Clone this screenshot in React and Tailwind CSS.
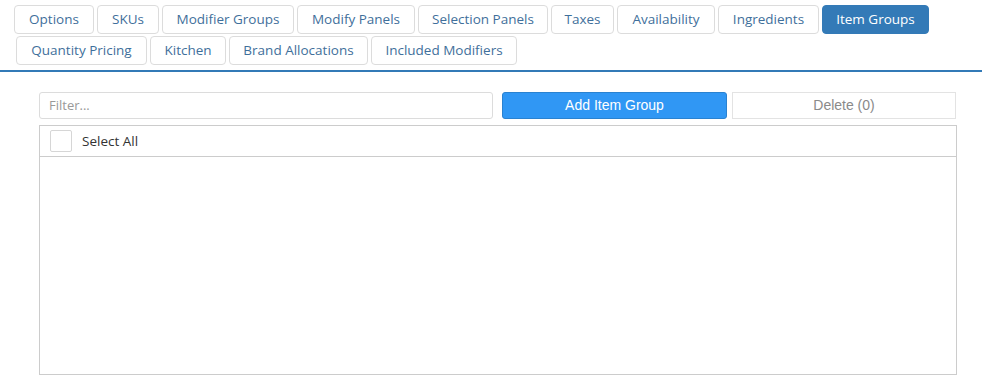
import React from "react";

const row1 = [
  ["Options", "w-[80px]"],
  ["SKUs", "w-[62px]"],
  ["Modifier Groups", "w-[132px]"],
  ["Modify Panels", "w-[118px]"],
  ["Selection Panels", "w-[130px]"],
  ["Taxes", "w-[63px]"],
  ["Availability", "w-[98px]"],
  ["Ingredients", "w-[101px]"],
  ["Item Groups", "w-[107px]", true],
];
const row2 = [
  ["Quantity Pricing", "w-[131px]"],
  ["Kitchen", "w-[76px]"],
  ["Brand Allocations", "w-[139px]"],
  ["Included Modifiers", "w-[146px]"],
];

function Tab({ label, w, active }) {
  return (
    <div
      className={
        w +
        " h-[29px] flex items-center justify-center rounded-[4px] border text-[13.5px] " +
        (active
          ? "bg-[#337ab7] border-[#337ab7] text-white"
          : "bg-white border-[#dcdcdc] text-[#3f6f9b]")
      }
    >
      {label}
    </div>
  );
}

export default function App() {
  return (
    <div
      className="w-[997px] h-[391px] bg-white overflow-hidden"
      style={{ fontFamily: '"Open Sans", "Noto Sans", sans-serif' }}
    >
      <div className="pt-[5px] pl-[14px] w-[982px] border-b-2 border-[#337ab7] pb-[5px]">
        <div className="flex gap-[3px]">
          {row1.map(([l, w, a]) => (
            <Tab key={l} label={l} w={w} active={a} />
          ))}
        </div>
        <div className="flex gap-[3px] mt-[2px] pl-[2px]">
          {row2.map(([l, w]) => (
            <Tab key={l} label={l} w={w} />
          ))}
        </div>
      </div>
      <div className="pl-[39px] pt-[20px]">
        <div className="flex h-[27px]">
          <div className="w-[454px] h-full border border-[#dcdcdc] rounded-[3px] flex items-center pl-[9px] text-[13px] text-[#999]">
            Filter...
          </div>
          <div
            className="ml-[9px] w-[225px] h-full bg-[#3097f4] border border-[#2a82d0] rounded-[3px] flex items-center justify-center text-white text-[14px]"
            style={{ fontFamily: '"Liberation Sans", Arial, sans-serif' }}
          >
            Add Item Group
          </div>
          <div
            className="ml-[5px] w-[224px] h-full border border-[#e3e3e3] flex items-center justify-center text-[#8a8a8a] text-[14px]"
            style={{ fontFamily: '"Liberation Sans", Arial, sans-serif' }}
          >
            Delete (0)
          </div>
        </div>
        <div className="mt-[6px] w-[918px] h-[250px] border border-[#cccccc] flex flex-col">
          <div className="h-[31px] border-b border-[#cccccc] flex items-center pl-[10px]">
            <div className="w-[22px] h-[22px] border border-[#d6d6d6] rounded-[2px]"></div>
            <span className="ml-[10px] text-[13.5px] text-[#333]">Select All</span>
          </div>
          <div className="flex-1"></div>
        </div>
      </div>
    </div>
  );
}
